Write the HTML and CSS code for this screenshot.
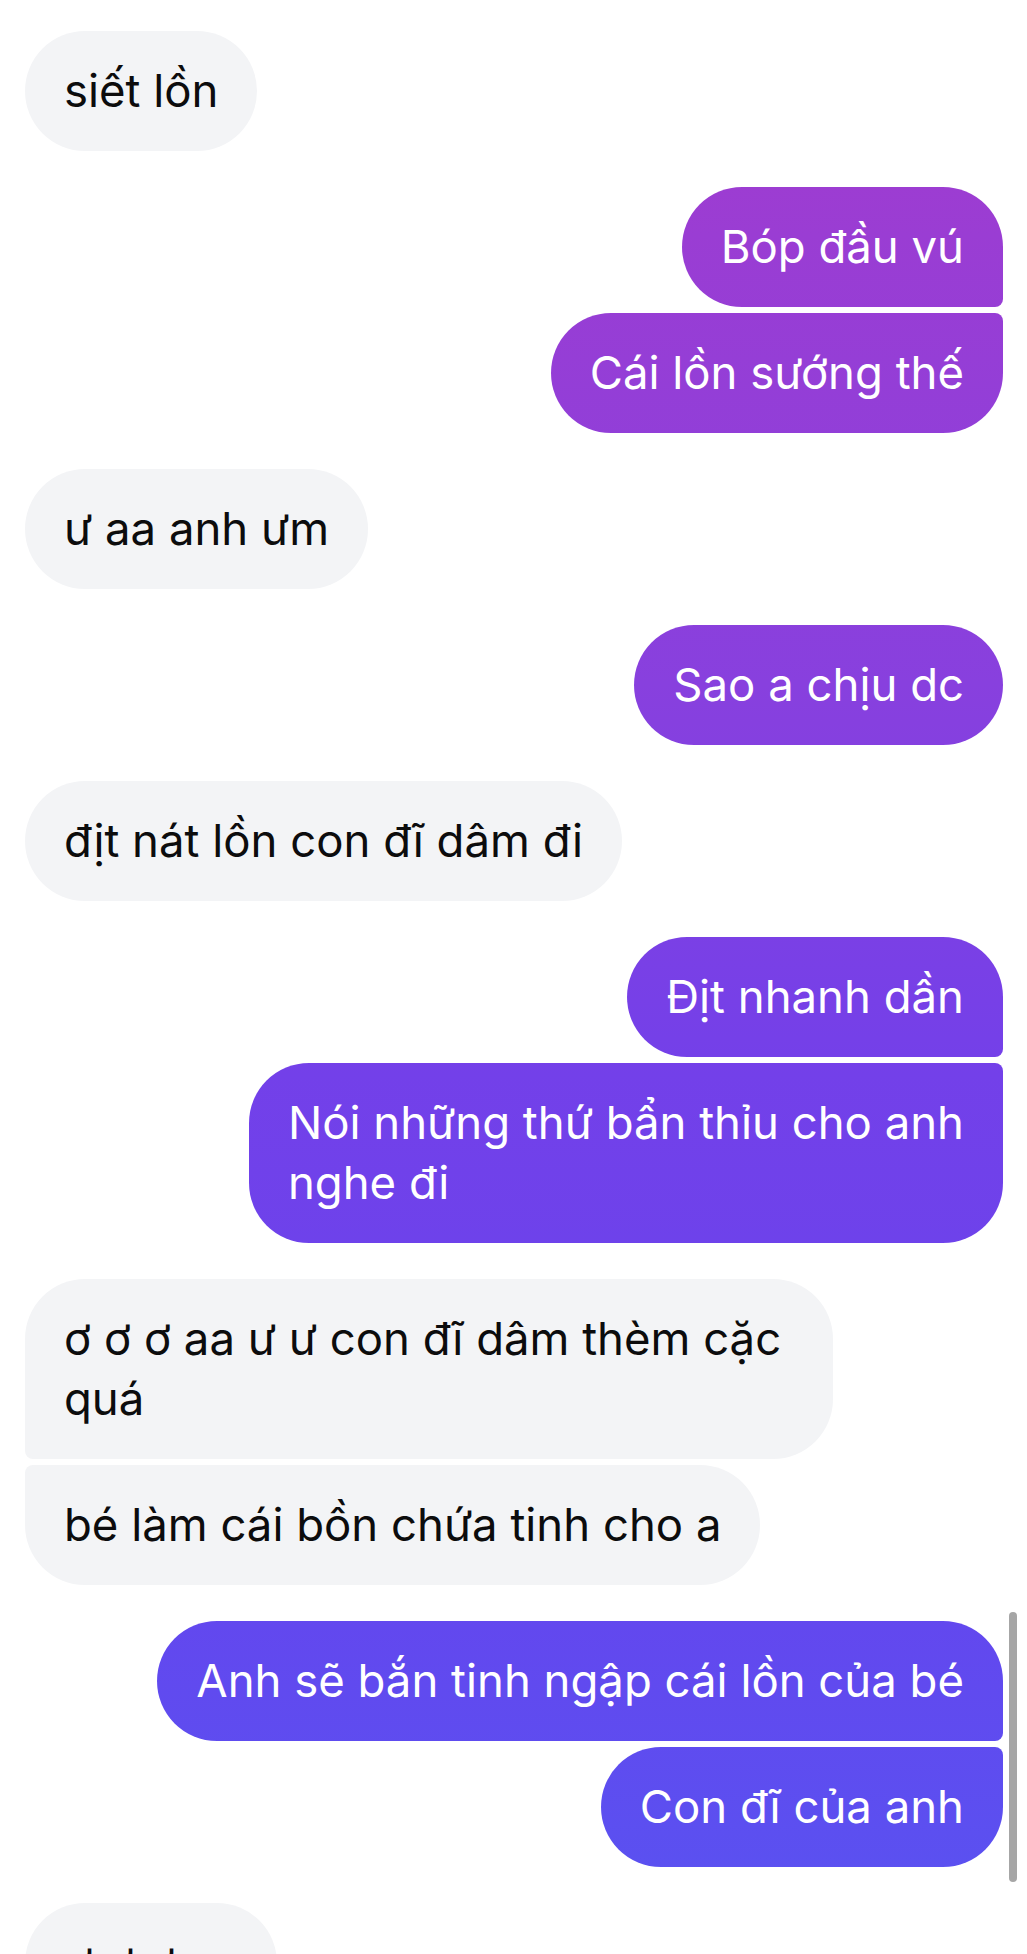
FILE: index.html
```html
<!DOCTYPE html>
<html lang="vi">
<head>
<meta charset="utf-8">
<title>Chat</title>
<link rel="stylesheet" href="styles.css">
</head>
<body>
<div class="chat">
  <div class="group recv">
    <div class="bubble">siết lồn</div>
  </div>
  <div class="group sent">
    <div class="bubble first">Bóp đầu vú</div>
    <div class="bubble last">Cái lồn sướng thế</div>
  </div>
  <div class="group recv">
    <div class="bubble">ư aa anh ưm</div>
  </div>
  <div class="group sent">
    <div class="bubble">Sao a chịu dc</div>
  </div>
  <div class="group recv">
    <div class="bubble">địt nát lồn con đĩ dâm đi</div>
  </div>
  <div class="group sent">
    <div class="bubble first">Địt nhanh dần</div>
    <div class="bubble last">Nói những thứ bẩn thỉu cho anh<br>nghe đi</div>
  </div>
  <div class="group recv">
    <div class="bubble first">ơ ơ ơ aa ư ư con đĩ dâm thèm cặc&nbsp;<br>quá</div>
    <div class="bubble last">bé làm cái bồn chứa tinh cho a</div>
  </div>
  <div class="group sent">
    <div class="bubble first">Anh sẽ bắn tinh ngập cái lồn của bé</div>
    <div class="bubble last">Con đĩ của anh</div>
  </div>
  <div class="group recv">
    <div class="bubble">ư ư ư aa</div>
  </div>
</div>
<div class="scrollbar"></div>
</body>
</html>
```
FILE: styles.css
```css
html, body {
  margin: 0;
  height: 1954px;
  overflow: hidden;
  background: #ffffff;
}
body {
  position: relative;
  font-family: Inter, "Noto Sans", "Liberation Sans", sans-serif;
}
.chat {
  display: flex;
  flex-direction: column;
  gap: 36px;
  padding: 31px 24px 0 25px;
}
.group {
  display: flex;
  flex-direction: column;
  gap: 6px;
}
.recv { align-items: flex-start; }
.sent { align-items: flex-end; }
.bubble {
  box-sizing: border-box;
  max-width: 900px;
  padding: 30px 39px;
  border-radius: 60px;
  font-size: 45.5px;
  line-height: 60px;
  letter-spacing: 0;
}
.recv .bubble {
  background: #f3f4f6;
  color: #0c0c0d;
}
.sent .bubble {
  color: #ffffff;
  background: linear-gradient(to bottom, #a53bcd 0%, #9a3dd3 12%, #8840de 35%, #7340e9 55%, #6446ee 80%, #5853f1 100%) fixed;
}
.sent .first { border-bottom-right-radius: 8px; }
.sent .last { border-top-right-radius: 8px; }
.recv .first { border-bottom-left-radius: 8px; }
.recv .last { border-top-left-radius: 8px; }
.scrollbar {
  position: absolute;
  left: 1009px;
  top: 1612px;
  width: 8px;
  height: 270px;
  border-radius: 4px;
  background: #a6a6a6;
}
```
